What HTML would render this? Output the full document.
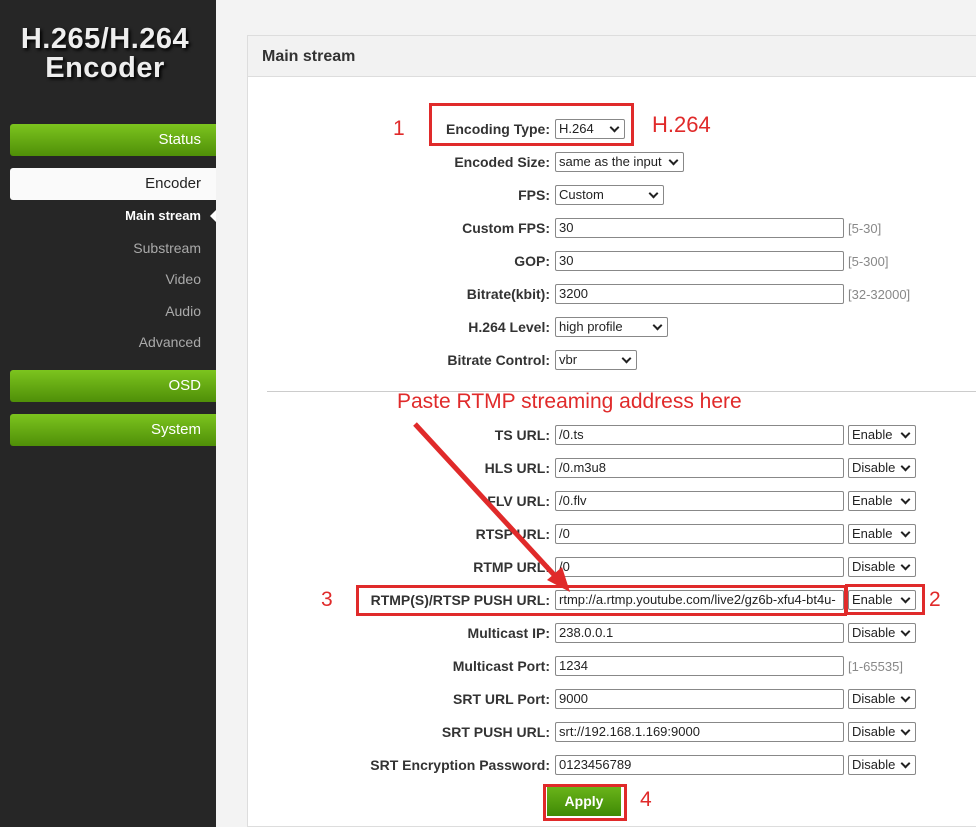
<!DOCTYPE html>
<html><head><style>
html,body{margin:0;width:976px;height:827px;overflow:hidden}
body{position:relative;background:#f3f3f3;font-family:"Liberation Sans",Arial,sans-serif}
.side{position:absolute;left:0;top:0;width:216px;height:827px;background:#262626}
.title{position:absolute;left:0;width:210px;text-align:center;color:#eee;font-weight:bold;font-size:29px;line-height:29px;top:25px;text-shadow:2px 2px 3px #000;letter-spacing:0.5px}
.gbtn{position:absolute;left:10px;width:206px;height:32px;border-radius:3px 0 0 3px;background:linear-gradient(#7cc41e,#4f8f08);color:#fff;font-size:15px;line-height:32px;text-align:right;box-sizing:border-box;padding-right:15px}
.wbtn{position:absolute;left:10px;width:206px;height:32px;border-radius:3px 0 0 3px;background:#fafafa;color:#222;font-size:15px;line-height:32px;text-align:right;box-sizing:border-box;padding-right:15px}
.sub{position:absolute;right:15px;font-size:14px;color:#aaa;white-space:nowrap}
.panel{position:absolute;left:247px;top:35px;width:729px;height:792px;background:#fff;border:1px solid #ddd;border-right:none;box-sizing:border-box}
.ph{height:40px;background:#f2f2f2;border-bottom:1px solid #ddd;font-size:16px;font-weight:bold;color:#333;line-height:42px;padding-left:14px}
.lab{position:absolute;right:426px;font-size:14px;font-weight:bold;color:#333;white-space:nowrap}
.in{position:absolute;left:555px;width:289px;height:20px;border:1px solid #888;box-sizing:border-box;font-size:13px;line-height:18px;padding-left:3px;color:#222;background:#fff;white-space:nowrap;overflow:hidden;border-radius:2px}
.sel{position:absolute;height:20px;border:1px solid #888;box-sizing:border-box;font-size:13px;line-height:18px;padding-left:3px;color:#222;background:#fff;border-radius:2px;white-space:nowrap}
.sel:after{content:"";position:absolute;right:6px;top:4px;width:5px;height:5px;border-right:2px solid #222;border-bottom:2px solid #222;transform:rotate(45deg)}
.hint{position:absolute;left:848px;font-size:13px;color:#888}
.red{position:absolute;border:3px solid #e02a2a;box-sizing:border-box}
.rt{position:absolute;color:#e02a2a;font-size:21px}
</style></head><body>
<div class="side">
<div class="title">H.265/H.264<br>Encoder</div>
<div class="gbtn" style="top:124px">Status</div>
<div class="wbtn" style="top:168px">Encoder</div>
<div class="sub" style="top:208px;color:#fff;font-weight:bold;font-size:13px">Main stream</div>
<div style="position:absolute;left:210px;top:210px;width:0;height:0;border-top:6px solid transparent;border-bottom:6px solid transparent;border-right:6px solid #fff"></div>
<div class="sub" style="top:240px">Substream</div>
<div class="sub" style="top:271px">Video</div>
<div class="sub" style="top:303px">Audio</div>
<div class="sub" style="top:334px">Advanced</div>
<div class="gbtn" style="top:370px">OSD</div>
<div class="gbtn" style="top:414px">System</div>
</div>
<div class="panel"><div class="ph">Main stream</div></div>
<div style="position:absolute;left:267px;top:391px;width:709px;height:1px;background:#ccc"></div>

<div class="lab" style="top:121px">Encoding Type:</div><div class="sel" style="left:555px;top:119px;width:70px">H.264</div>
<div class="lab" style="top:154px">Encoded Size:</div><div class="sel" style="left:555px;top:152px;width:129px">same as the input</div>
<div class="lab" style="top:187px">FPS:</div><div class="sel" style="left:555px;top:185px;width:109px">Custom</div>
<div class="lab" style="top:220px">Custom FPS:</div><div class="in" style="top:218px">30</div><div class="hint" style="top:221px">[5-30]</div>
<div class="lab" style="top:253px">GOP:</div><div class="in" style="top:251px">30</div><div class="hint" style="top:254px">[5-300]</div>
<div class="lab" style="top:286px">Bitrate(kbit):</div><div class="in" style="top:284px">3200</div><div class="hint" style="top:287px">[32-32000]</div>
<div class="lab" style="top:319px">H.264 Level:</div><div class="sel" style="left:555px;top:317px;width:113px">high profile</div>
<div class="lab" style="top:352px">Bitrate Control:</div><div class="sel" style="left:555px;top:350px;width:82px">vbr</div>

<div class="lab" style="top:427px">TS URL:</div><div class="in" style="top:425px">/0.ts</div><div class="sel" style="left:848px;top:425px;width:68px">Enable</div>
<div class="lab" style="top:460px">HLS URL:</div><div class="in" style="top:458px">/0.m3u8</div><div class="sel" style="left:848px;top:458px;width:68px">Disable</div>
<div class="lab" style="top:493px">FLV URL:</div><div class="in" style="top:491px">/0.flv</div><div class="sel" style="left:848px;top:491px;width:68px">Enable</div>
<div class="lab" style="top:526px">RTSP URL:</div><div class="in" style="top:524px">/0</div><div class="sel" style="left:848px;top:524px;width:68px">Enable</div>
<div class="lab" style="top:559px">RTMP URL:</div><div class="in" style="top:557px">/0</div><div class="sel" style="left:848px;top:557px;width:68px">Disable</div>
<div class="lab" style="top:592px">RTMP(S)/RTSP PUSH URL:</div><div class="in" style="top:590px">rtmp://a.rtmp.youtube.com/live2/gz6b-xfu4-bt4u-</div><div class="sel" style="left:848px;top:590px;width:68px">Enable</div>
<div class="lab" style="top:625px">Multicast IP:</div><div class="in" style="top:623px">238.0.0.1</div><div class="sel" style="left:848px;top:623px;width:68px">Disable</div>
<div class="lab" style="top:658px">Multicast Port:</div><div class="in" style="top:656px">1234</div><div class="hint" style="top:659px">[1-65535]</div>
<div class="lab" style="top:691px">SRT URL Port:</div><div class="in" style="top:689px">9000</div><div class="sel" style="left:848px;top:689px;width:68px">Disable</div>
<div class="lab" style="top:724px">SRT PUSH URL:</div><div class="in" style="top:722px">srt://192.168.1.169:9000</div><div class="sel" style="left:848px;top:722px;width:68px">Disable</div>
<div class="lab" style="top:757px">SRT Encryption Password:</div><div class="in" style="top:755px">0123456789</div><div class="sel" style="left:848px;top:755px;width:68px">Disable</div>

<div style="position:absolute;left:547px;top:786px;width:74px;height:30px;background:linear-gradient(#6bb51a,#3f8a05);color:#fff;font-weight:bold;font-size:14px;line-height:30px;text-align:center">Apply</div>

<div class="red" style="left:429px;top:103px;width:205px;height:43px"></div>
<div class="red" style="left:356px;top:585px;width:491px;height:31px"></div>
<div class="red" style="left:845px;top:584px;width:80px;height:31px"></div>
<div class="red" style="left:543px;top:784px;width:84px;height:37px"></div>
<div class="rt" style="left:393px;top:117px">1</div>
<div class="rt" style="left:652px;top:112px;font-size:22px">H.264</div>
<div class="rt" style="left:321px;top:588px">3</div>
<div class="rt" style="left:929px;top:588px">2</div>
<div class="rt" style="left:640px;top:788px">4</div>
<div class="rt" style="left:397px;top:390px">Paste RTMP streaming address here</div>
<svg style="position:absolute;left:0;top:0" width="976" height="827"><line x1="415" y1="424" x2="557" y2="578" stroke="#e02a2a" stroke-width="5"/><polygon points="570,592 547,580 562,567" fill="#e02a2a"/></svg>
</body></html>
